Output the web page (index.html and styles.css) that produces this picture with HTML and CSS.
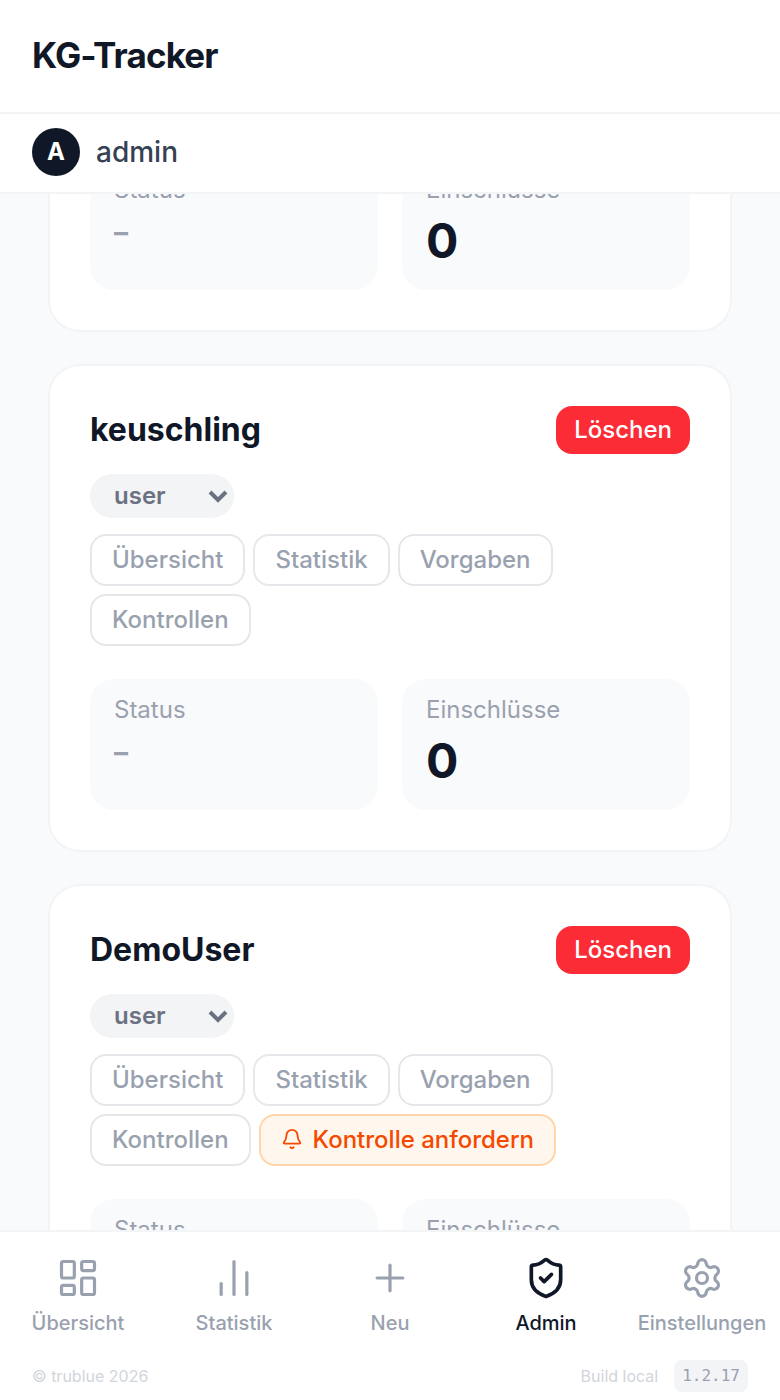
FILE: index.html
```html
<!DOCTYPE html>
<html lang="de">

<head>
    <meta charset="UTF-8">
    <meta name="viewport" content="width=device-width, initial-scale=1.0">
    <title>KG-Tracker</title>
    <link rel="stylesheet" href="styles.css">
</head>

<body>
    <header class="header">
        <h1>KG-Tracker</h1>
    </header>

    <div class="user-bar">
        <span class="avatar">A</span>
        <span class="user-name">admin</span>
    </div>

    <main class="content">
        <div class="user-list">
            <section class="card">
                <div class="stats">
                    <div class="stat">
                        <div class="stat-label">Status</div>
                        <div class="stat-empty">–</div>
                    </div>
                    <div class="stat">
                        <div class="stat-label">Einschlüsse</div>
                        <div class="stat-value">0</div>
                    </div>
                </div>
            </section>

            <section class="card">
                <div class="card-head">
                    <h2>keuschling</h2>
                    <button type="button" class="delete-btn">Löschen</button>
                </div>
                <div class="role">
                    <select class="role-select" aria-label="Rolle von keuschling">
                        <option selected>user</option>
                        <option>admin</option>
                    </select>
                    <svg class="role-arrow" viewBox="0 0 20 14"><path d="M2 2l8 8 8-8"/></svg>
                </div>
                <div class="chips">
                    <a href="#" class="chip">Übersicht</a>
                    <a href="#" class="chip">Statistik</a>
                    <a href="#" class="chip">Vorgaben</a>
                    <a href="#" class="chip">Kontrollen</a>
                </div>
                <div class="stats">
                    <div class="stat">
                        <div class="stat-label">Status</div>
                        <div class="stat-empty">–</div>
                    </div>
                    <div class="stat">
                        <div class="stat-label">Einschlüsse</div>
                        <div class="stat-value">0</div>
                    </div>
                </div>
            </section>

            <section class="card">
                <div class="card-head">
                    <h2>DemoUser</h2>
                    <button type="button" class="delete-btn">Löschen</button>
                </div>
                <div class="role">
                    <select class="role-select" aria-label="Rolle von DemoUser">
                        <option selected>user</option>
                        <option>admin</option>
                    </select>
                    <svg class="role-arrow" viewBox="0 0 20 14"><path d="M2 2l8 8 8-8"/></svg>
                </div>
                <div class="chips">
                    <a href="#" class="chip">Übersicht</a>
                    <a href="#" class="chip">Statistik</a>
                    <a href="#" class="chip">Vorgaben</a>
                    <a href="#" class="chip">Kontrollen</a>
                    <button type="button" class="chip chip-request">
                        <svg class="bell" viewBox="0 0 24 24">
                            <path d="M10.268 21a2 2 0 0 0 3.464 0"/>
                            <path d="M3.262 15.326A1 1 0 0 0 4 17h16a1 1 0 0 0 .74-1.673C19.41 13.956 18 12.499 18 8A6 6 0 0 0 6 8c0 4.499-1.411 5.956-2.738 7.326"/>
                        </svg>
                        Kontrolle anfordern
                    </button>
                </div>
                <div class="stats">
                    <div class="stat">
                        <div class="stat-label">Status</div>
                        <div class="stat-empty">–</div>
                    </div>
                    <div class="stat">
                        <div class="stat-label">Einschlüsse</div>
                        <div class="stat-value">0</div>
                    </div>
                </div>
            </section>
        </div>
    </main>

    <footer class="bottom">
        <nav class="nav">
            <a href="#" class="nav-item">
                <svg viewBox="0 0 24 24">
                    <rect width="7" height="9" x="3" y="3" rx="1"/>
                    <rect width="7" height="5" x="14" y="3" rx="1"/>
                    <rect width="7" height="9" x="14" y="12" rx="1"/>
                    <rect width="7" height="5" x="3" y="16" rx="1"/>
                </svg>
                Übersicht
            </a>
            <a href="#" class="nav-item">
                <svg viewBox="0 0 24 24">
                    <path d="M5 21v-6"/>
                    <path d="M12 21V3"/>
                    <path d="M19 21V9"/>
                </svg>
                Statistik
            </a>
            <a href="#" class="nav-item">
                <svg viewBox="0 0 24 24">
                    <path d="M5 12h14"/>
                    <path d="M12 5v14"/>
                </svg>
                Neu
            </a>
            <a href="#" class="nav-item active">
                <svg viewBox="0 0 24 24">
                    <path d="M20 13c0 5-3.5 7.5-7.66 8.95a1 1 0 0 1-.67-.01C7.5 20.5 4 18 4 13V6a1 1 0 0 1 1-1c2 0 4.5-1.2 6.24-2.72a1.17 1.17 0 0 1 1.52 0C14.51 3.81 17 5 19 5a1 1 0 0 1 1 1z"/>
                    <path d="m9 12 2 2 4-4"/>
                </svg>
                Admin
            </a>
            <a href="#" class="nav-item">
                <svg viewBox="0 0 24 24">
                    <path d="M9.671 4.136a2.34 2.34 0 0 1 4.659 0 2.34 2.34 0 0 0 3.319 1.915 2.34 2.34 0 0 1 2.33 4.033 2.34 2.34 0 0 0 0 3.831 2.34 2.34 0 0 1-2.33 4.033 2.34 2.34 0 0 0-3.319 1.915 2.34 2.34 0 0 1-4.659 0 2.34 2.34 0 0 0-3.32-1.915 2.34 2.34 0 0 1-2.33-4.033 2.34 2.34 0 0 0 0-3.831A2.34 2.34 0 0 1 6.35 6.051a2.34 2.34 0 0 0 3.319-1.915"/>
                    <circle cx="12" cy="12" r="3"/>
                </svg>
                Einstellungen
            </a>
        </nav>
        <div class="meta">
            <span>© trublue 2026</span>
            <span class="build">Build local <code class="version">1.2.17</code></span>
        </div>
    </footer>
</body>

</html>
```

FILE: styles.css
```css
* {
    box-sizing: border-box;
}

body {
    font-family: Inter, "Liberation Sans", sans-serif;
    margin: 0;
    height: 100vh;
    display: flex;
    flex-direction: column;
    background-color: #f8fafc;
    color: #101828;
}

h1,
h2 {
    margin: 0;
    font-weight: 700;
}

a {
    text-decoration: none;
}

svg {
    fill: none;
    stroke: currentColor;
    stroke-width: 2;
    stroke-linecap: round;
    stroke-linejoin: round;
}

.header {
    padding: 31px 32px 33px;
    background: #fff;
    border-bottom: 2px solid #f3f4f6;
}

h1 {
    font-size: 35px;
    line-height: 48px;
    letter-spacing: -0.025em;
}

.user-bar {
    display: flex;
    align-items: center;
    gap: 16px;
    padding: 14px 32px 16px;
    background: #fff;
    border-bottom: 2px solid #f3f4f6;
}

.avatar {
    width: 48px;
    height: 48px;
    border-radius: 50%;
    background: #101828;
    color: #fff;
    font-size: 24px;
    font-weight: 700;
    line-height: 48px;
    text-align: center;
}

.user-name {
    font-size: 28px;
    font-weight: 500;
    color: #364153;
}

/* scrolled list between the bars */
.content {
    flex: 1;
    min-height: 0;
    overflow: hidden;
}

.user-list {
    display: flex;
    flex-direction: column;
    gap: 32px;
    margin-top: -77px;
    padding: 0 48px;
}

.card {
    padding: 40px;
    background: #fff;
    border: 2px solid #f3f4f6;
    border-radius: 32px;
}

.card-head {
    display: flex;
    justify-content: space-between;
    align-items: center;
    margin-bottom: 20px;
}

h2 {
    font-size: 32px;
    line-height: 48px;
}

.delete-btn {
    height: 48px;
    padding: 0 18px 2px;
    border: none;
    border-radius: 16px;
    background: #fb2c36;
    color: #fff;
    font-family: inherit;
    font-size: 24px;
    font-weight: 500;
}

.role {
    position: relative;
    width: 144px;
    height: 44px;
    margin-bottom: 16px;
    color: #6a7282;
}

.role-select {
    appearance: none;
    width: 100%;
    height: 44px;
    padding: 0 24px 2px;
    border: none;
    border-radius: 22px;
    background: #f3f4f6;
    color: inherit;
    font-family: inherit;
    font-size: 24px;
    font-weight: 600;
}

.role-arrow {
    position: absolute;
    right: 6px;
    top: 16px;
    width: 20px;
    height: 14px;
    stroke-width: 4;
    stroke-linecap: butt;
    stroke-linejoin: miter;
    pointer-events: none;
}

.chips {
    display: flex;
    flex-wrap: wrap;
    gap: 8px;
    margin-bottom: 33px;
}

.chip {
    display: flex;
    align-items: center;
    height: 52px;
    padding: 0 20px 2px;
    border: 2px solid #e5e7eb;
    border-radius: 16px;
    color: #99a1af;
    font-size: 24px;
    font-weight: 500;
}

.chip-request {
    gap: 10px;
    border-color: #ffd6a7;
    background: #fff7ed;
    color: #f54900;
    font-family: inherit;
}

.bell {
    width: 22px;
    height: 22px;
}

.stats {
    display: grid;
    grid-template-columns: 1fr 1fr;
    gap: 24px;
}

.stat {
    height: 131px;
    padding: 15px 24px;
    border-radius: 24px;
    background: #f9fafb;
}

.stat-label {
    font-size: 24px;
    line-height: 32px;
    color: #99a1af;
}

.stat-empty {
    margin-top: 4px;
    font-size: 28px;
    font-weight: 700;
    line-height: 44px;
    color: #99a1af;
}

.stat-value {
    margin-top: 3px;
    font-size: 48px;
    font-weight: 700;
    line-height: 64px;
}

.bottom {
    background: #fff;
    border-top: 2px solid #f3f4f6;
}

.nav {
    display: grid;
    grid-template-columns: repeat(5, 1fr);
    padding: 24px 0 22px;
}

.nav-item {
    display: flex;
    flex-direction: column;
    align-items: center;
    gap: 8px;
    color: #99a1af;
    font-size: 20px;
    font-weight: 500;
    line-height: 30px;
}

.nav-item svg {
    width: 44px;
    height: 44px;
    stroke-width: 1.75;
}

.nav-item.active {
    color: #101828;
}

.nav-item.active svg {
    stroke-width: 2;
}

.meta {
    display: flex;
    justify-content: space-between;
    align-items: center;
    padding: 0 32px;
    margin-bottom: 8px;
    font-size: 16px;
    line-height: 32px;
    color: #d1d5dc;
}

.build {
    display: flex;
    gap: 16px;
}

.version {
    padding: 0 8px;
    border-radius: 8px;
    background: #f3f4f6;
    color: #99a1af;
    font-family: "DejaVu Sans Mono", monospace;
    font-size: 16px;
}
```
